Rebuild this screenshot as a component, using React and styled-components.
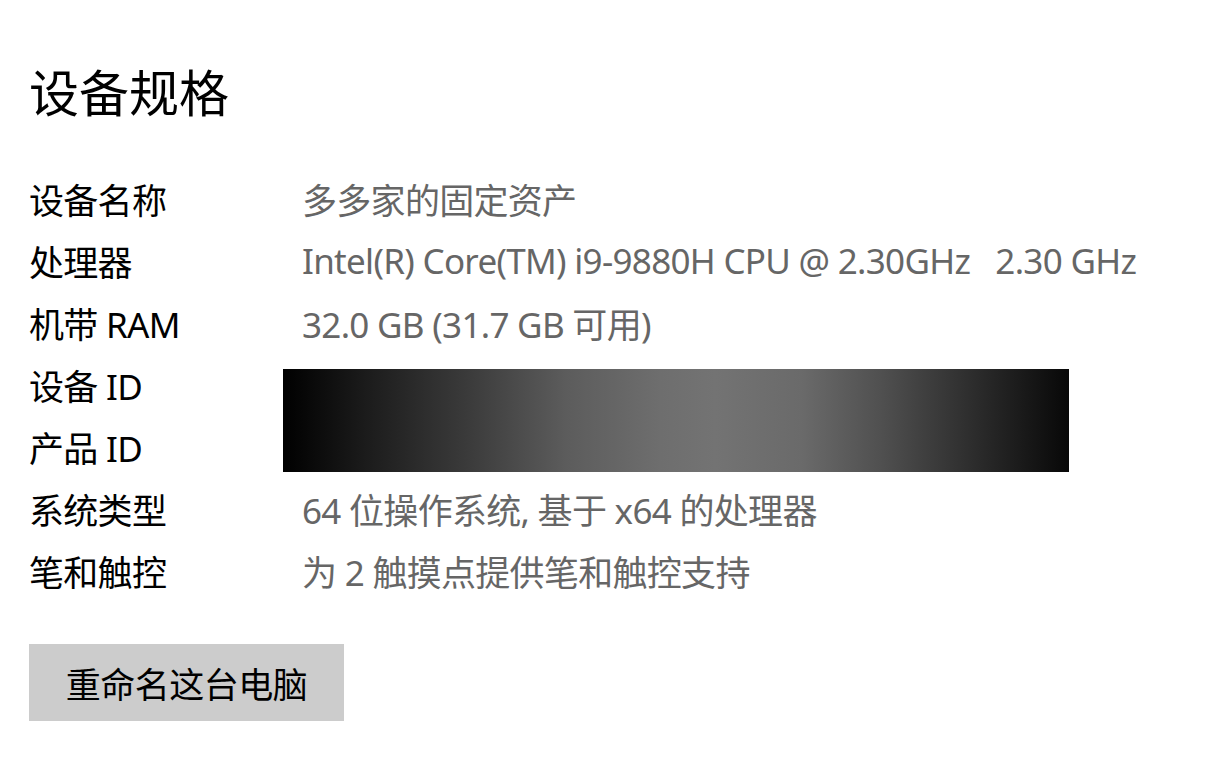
import React from 'react';
import styled, { createGlobalStyle } from 'styled-components';

const GlobalStyle = createGlobalStyle`
  body {
    margin: 0;
    background: #fff;
    font-family: "Noto Sans", "Noto Sans CJK SC", sans-serif;
  }
`;

const specs = [
  { label: '设备名称', value: '多多家的固定资产' },
  { label: '处理器', value: 'Intel(R) Core(TM) i9-9880H CPU @ 2.30GHz\u00a0\u00a0\u00a02.30 GHz' },
  { label: '机带 RAM', value: '32.0 GB (31.7 GB 可用)' },
  { label: '设备 ID', hidden: true },
  { label: '产品 ID', hidden: true },
  { label: '系统类型', value: '64 位操作系统, 基于 x64 的处理器' },
  { label: '笔和触控', value: '为 2 触摸点提供笔和触控支持' },
];

export default function App() {
  return (
    <Page>
      <GlobalStyle />
      <Title>设备规格</Title>
      <SpecGrid>
        {specs.map((s, i) => (
          <React.Fragment key={s.label}>
            <Label>{s.label}</Label>
            {s.hidden ? (
              specs[i - 1].hidden ? null : <Redacted />
            ) : (
              <Value>{s.value}</Value>
            )}
          </React.Fragment>
        ))}
      </SpecGrid>
      <RenameButton>重命名这台电脑</RenameButton>
    </Page>
  );
}

const Page = styled.div`
  display: flex;
  flex-direction: column;
  align-items: flex-start;
  padding: 60px 0 0 29px;
`;

const Title = styled.h1`
  margin: 0;
  font-size: 50px;
  font-weight: 400;
  line-height: 66px;
  color: #000;
`;

const SpecGrid = styled.div`
  display: grid;
  grid-template-columns: 273px auto;
  grid-auto-rows: 62px;
  margin-top: 41px;
  font-size: 35px;
  letter-spacing: -0.7px;
`;

const Label = styled.div`
  grid-column: 1;
  display: flex;
  align-items: center;
  color: #000;
  white-space: nowrap;
`;

const Value = styled.div`
  grid-column: 2;
  display: flex;
  align-items: center;
  color: #666;
  white-space: nowrap;
`;

const Redacted = styled.div`
  grid-column: 2;
  grid-row: span 2;
  align-self: start;
  margin: 16px 0 0 -19px;
  width: 786px;
  height: 103px;
  background: linear-gradient(
    to right,
    #000 0%,
    #1a1a1a 10%,
    #3c3c3c 24%,
    #5c5c5c 36%,
    #6e6e6e 48%,
    #737373 55%,
    #6a6a6a 66%,
    #505050 76%,
    #2c2c2c 88%,
    #080808 100%
  );
`;

const RenameButton = styled.button`
  margin-top: 43px;
  width: 315px;
  height: 77px;
  border: none;
  background: #ccc;
  color: #000;
  font-family: inherit;
  font-size: 35px;
  letter-spacing: -0.5px;
  padding: 0;
`;
